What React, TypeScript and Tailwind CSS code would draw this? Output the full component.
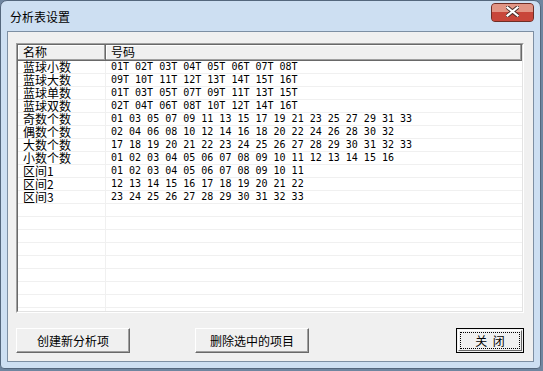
const cjk = "font-['Noto_Sans_CJK_SC','Microsoft_YaHei',sans-serif]";
const mono = "font-['DejaVu_Sans_Mono','Liberation_Mono',monospace]";

const rows: [string, string][] = [
    ['蓝球小数', '01T 02T 03T 04T 05T 06T 07T 08T'],
    ['蓝球大数', '09T 10T 11T 12T 13T 14T 15T 16T'],
    ['蓝球单数', '01T 03T 05T 07T 09T 11T 13T 15T'],
    ['蓝球双数', '02T 04T 06T 08T 10T 12T 14T 16T'],
    ['奇数个数', '01 03 05 07 09 11 13 15 17 19 21 23 25 27 29 31 33'],
    ['偶数个数', '02 04 06 08 10 12 14 16 18 20 22 24 26 28 30 32'],
    ['大数个数', '17 18 19 20 21 22 23 24 25 26 27 28 29 30 31 32 33'],
    ['小数个数', '01 02 03 04 05 06 07 08 09 10 11 12 13 14 15 16'],
    ['区间1', '01 02 03 04 05 06 07 08 09 10 11'],
    ['区间2', '12 13 14 15 16 17 18 19 20 21 22'],
    ['区间3', '23 24 25 26 27 28 29 30 31 32 33'],
];

// pad with empty rows so the grid lines run to the bottom of the list
const allRows: [string, string][] = [...rows, ...Array.from({length: 10}, () => ['', ''] as [string, string])];

function Button({label, width, isDefault = false}: {label: string; width: string; isDefault?: boolean}) {
    if (isDefault) {
        return (
            <button className={`${width} h-[25px] border border-black bg-[#f0f0f0] p-[1px] ${cjk} text-[12px] text-black`}>
                <span className="flex h-full w-full border border-t-white border-l-white border-r-[#696969] border-b-[#696969] p-[1px]">
                    <span className="flex flex-1 items-center justify-center border border-dotted border-black leading-none whitespace-pre">
                        {label}
                    </span>
                </span>
            </button>
        );
    }

    return (
        <button
            className={`${width} h-[25px] flex items-center justify-center bg-[#f0f0f0] border border-t-white border-l-white border-r-[#696969] border-b-[#696969] shadow-[inset_-1px_-1px_0_#a0a0a0] ${cjk} text-[12px] text-black leading-none`}
        >
            {label}
        </button>
    );
}

export default function App() {
    return (
        <div className="w-[543px] h-[371px] bg-[#6f86a0] overflow-hidden">
            <div className="w-[541px] h-[369px] flex flex-col rounded-t-[7px] rounded-b-[4px] border border-[#54677d] bg-[#cddff2]">
                {/* title bar */}
                <div className="h-[30px] flex items-start justify-between">
                    <div className={`pl-[9px] pt-[9px] ${cjk} text-[12px] leading-[14px] text-black`}>分析表设置</div>
                    <div className="mr-[6px] mt-[2px] w-[43px] h-[19px] rounded-[4px] border border-[#6e2e26] bg-[#c94c3c] flex flex-col overflow-hidden">
                        <div className="h-[8px] bg-[#e29585]" />
                        <div className="flex-1 bg-[#c8463a] flex items-start justify-center">
                            <svg width="13" height="11" viewBox="0 0 13 11" className="-mt-[6px]">
                                <path d="M1 1 L12 10 M12 1 L1 10" stroke="#4a2e2a" strokeWidth="4" strokeLinecap="square" />
                                <path d="M1.5 1.5 L11.5 9.5 M11.5 1.5 L1.5 9.5" stroke="#ffffff" strokeWidth="2.2" strokeLinecap="square" />
                            </svg>
                        </div>
                    </div>
                </div>

                {/* client area */}
                <div className="mx-[6px] mb-[6px] flex-1 flex flex-col border border-[#7d8fa3] bg-[#f0f0f0] pl-[8px] pr-[9px] pt-[11px] pb-[8px]">
                    <div className="h-[270px] flex flex-col border border-t-[#a0a0a0] border-l-[#a0a0a0] border-r-white border-b-white">
                        <div className="flex-1 flex flex-col border border-t-[#696969] border-l-[#696969] border-r-[#e3e3e3] border-b-[#e3e3e3] bg-white overflow-hidden">
                            <div className={`h-[16px] shrink-0 flex ${cjk} text-[12px] leading-[14px] text-black`}>
                                <div className="w-[88px] pl-[5px] bg-[#f0f0f0] border-r border-b border-[#696969] shadow-[inset_-1px_-1px_0_#a0a0a0,inset_1px_1px_0_#ffffff]">名称</div>
                                <div className="flex-1 pl-[5px] bg-[#f0f0f0] border-r border-b border-[#696969] shadow-[inset_-1px_-1px_0_#a0a0a0,inset_1px_1px_0_#ffffff]">号码</div>
                            </div>
                            {allRows.map(([name, nums], i) => (
                                <div key={i} className="h-[13px] shrink-0 flex border-b border-[#f0f0f0] text-black">
                                    <div className={`w-[88px] pl-[5px] border-r border-[#f0f0f0] ${cjk} text-[12px] leading-[12px] whitespace-nowrap`}>{name}</div>
                                    <div className={`flex-1 pl-[5px] ${mono} text-[10px] leading-[12px] whitespace-pre`}>{nums}</div>
                                </div>
                            ))}
                        </div>
                    </div>

                    <div className="mt-auto flex items-center">
                        <Button label="创建新分析项" width="w-[114px]" />
                        <div className="w-[65px]" />
                        <Button label="删除选中的项目" width="w-[114px]" />
                        <div className="flex-1" />
                        <Button label="关  闭" width="w-[68px]" isDefault />
                    </div>
                </div>
            </div>
        </div>
    );
}
